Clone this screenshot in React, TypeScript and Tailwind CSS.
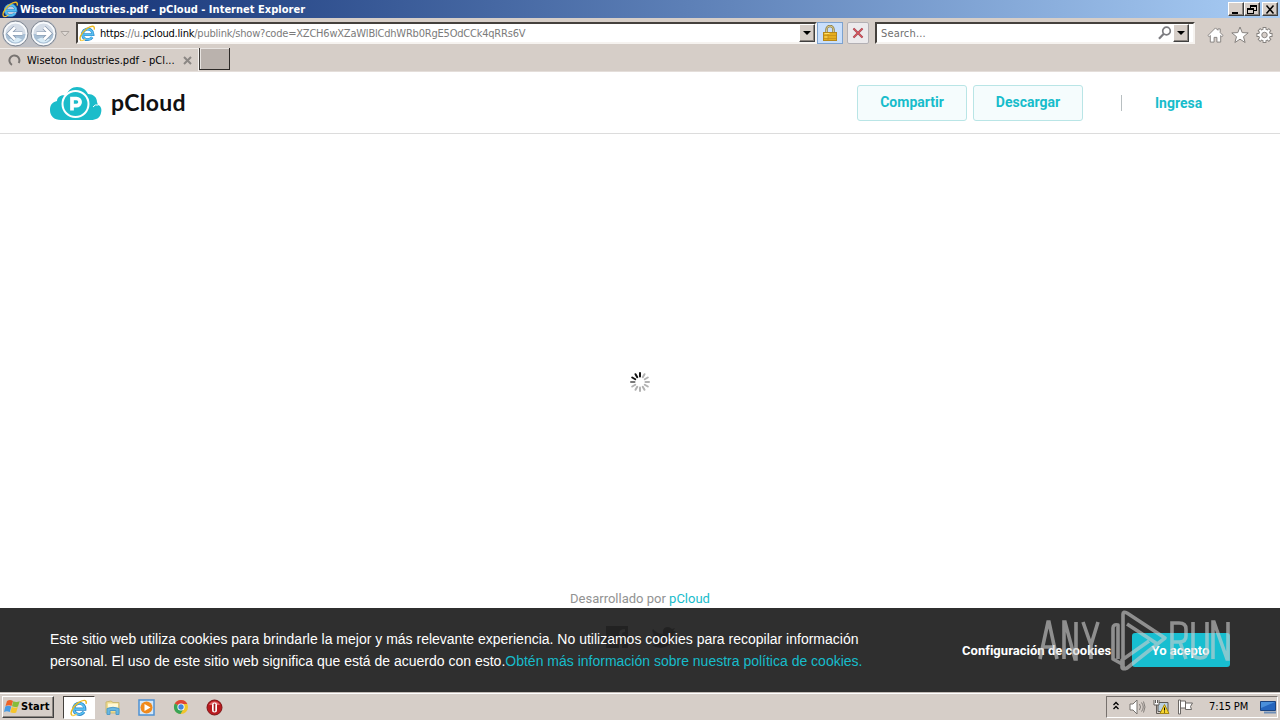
import type { ReactNode } from 'react';

const raised = 'border border-t-white border-l-white border-r-[#404040] border-b-[#404040] bg-[#d6cec8]';
const sunken = 'border-2 border-t-[#45413d] border-l-[#45413d] border-r-[#f6f3f0] border-b-[#f6f3f0] bg-white';

function IeLogo({ size = 16 }: { size?: number }) {
  return (
    <svg width={size} height={size} viewBox="0 0 16 16" className="shrink-0" fill="none">
      <circle cx="8" cy="8.700" r="6" fill="#fff" fillOpacity=".75" />
      <path d="M4.200 9H13.200A5 5 0 1 0 12.400 11.500" stroke="#2b86c8" strokeWidth="2.700" />
      <path d="M4.200 9H13A4.900 4.900 0 1 0 12.300 11.300" stroke="#58bff1" strokeWidth="1.600" />
      <path d="M2 14.600C-.7 13.500 2.200 7 7.200 3.500 11.500.5 15.300.2 14.300 4.300" stroke="#edb91f" strokeWidth="1.300" />
      <path d="M2 14.600c1.200.4 2.700-.3 4-1.300" stroke="#f5d052" strokeWidth="1.100" />
    </svg>
  );
}

function NavCircle({ flip }: { flip?: boolean }) {
  return (
    <svg width="27" height="27" viewBox="0 0 27 27" className="shrink-0">
      <circle cx="13.500" cy="13.500" r="12.500" fill="#e3e7ed" stroke="#7d8591" />
      <circle cx="13.500" cy="13.500" r="10.800" fill="#d5dde7" stroke="#f9fbfd" strokeWidth="1.500" />
      <path d="M3.500 14h20a10 9.500 0 0 1-20 0z" fill="#a9c0d5" />
      <path d="M7 19.500q6.500-4 13 0-6.500 6-13 0z" fill="#d9ecf7" />
      <g transform={flip ? 'rotate(180 13.5 13.5)' : undefined} fill="none">
        <path d="M13 7.500l-6 6 6 6M8 13.500H20.500" stroke="#8496ad" strokeWidth="4.200" />
        <path d="M13 7.500l-6 6 6 6M8 13.500H20.500" stroke="#fff" strokeWidth="2.800" />
      </g>
    </svg>
  );
}

function WinButton({ children }: { children: ReactNode }) {
  return (
    <button className={`flex h-[14px] w-[16px] items-center justify-center shadow-[inset_-1px_-1px_#8b8580] ${raised}`}>
      <svg width="12" height="11" viewBox="0 0 12 11" fill="none" stroke="#000" shapeRendering="crispEdges">
        {children}
      </svg>
    </button>
  );
}

function DropButton() {
  return (
    <button className={`flex h-[18px] w-[16px] shrink-0 items-center justify-center shadow-[inset_-1px_-1px_#8b8580] ${raised}`}>
      <svg width="8" height="4" viewBox="0 0 8 4"><path d="M0 0h8L4 4z" /></svg>
    </button>
  );
}

function TitleBar() {
  return (
    <div className="flex h-[18px] items-center bg-linear-to-r from-[#102b70] to-[#a9cdf5] pl-[2px] pr-[2px]">
      <IeLogo size={17} />
      <span className="ml-px grow whitespace-nowrap pt-px font-['DejaVu_Sans_Condensed','DejaVu_Sans',sans-serif] text-[11px] font-bold leading-[17px] tracking-[0.02px] text-white">
        Wiseton Industries.pdf - pCloud - Internet Explorer
      </span>
      <WinButton><path d="M2 8h6M2 9h6" /></WinButton>
      <WinButton><path d="M4 1.500h6v5H8M4 1v3M1.500 4.500h6v5h-6zM1 5.500h7M4 2.500h6" /></WinButton>
      <div className="w-[2px]" />
      <WinButton><path d="M2.500 1.500l7 8M9.500 1.500l-7 8" strokeWidth="1.500" shapeRendering="auto" /></WinButton>
    </div>
  );
}

function AddressBar() {
  return (
    <div className="flex h-[30px] items-start pl-[2px]">
      <div className="mt-[2px] flex h-[27px] gap-px rounded-full bg-[#bfc0c5]">
        <NavCircle />
        <NavCircle flip />
      </div>
      <svg width="10" height="6" viewBox="0 0 10 6" className="ml-[3px] mt-[13px]" fill="#e1dbd7" stroke="#aaa4a0">
        <path d="M1 .5h8L5 5z" />
      </svg>
      <div className={`ml-[6px] mt-[4px] flex h-[22px] w-[741px] items-center pl-[1px] ${sunken}`}>
        <IeLogo size={17} />
        <div className="ml-[4px] grow whitespace-nowrap pt-[2px] font-['DejaVu_Sans_Condensed','DejaVu_Sans',sans-serif] text-[11px] leading-[16px] tracking-[-0.21px] text-[#7b7b7b]">
          <span className="text-black">https</span>://u.<span className="text-black">pcloud.link</span>/publink/show?code=XZCH6wXZaWlBlCdhWRb0RgE5OdCCk4qRRs6V
        </div>
        <DropButton />
      </div>
      <div className="mt-[4px] flex h-[22px] w-[26px] items-center justify-center border border-[#7da2cf] bg-[#c9dffc]">
        <svg width="14" height="17" viewBox="0 0 14 17">
          <path d="M3.500 8V4.500a3.500 3.500 0 0 1 7 0V8" fill="none" stroke="#8a7a42" strokeWidth="2.400" />
          <path d="M3.500 8V4.500a3.500 3.500 0 0 1 7 0V8" fill="none" stroke="#eee0a0" strokeWidth=".8" />
          <rect x=".5" y="7.500" width="13" height="8" fill="#e6ad1d" stroke="#b5871b" />
          <path d="M1 10.500h12M1 13.500h12M5 8v8" stroke="#c28e1b" strokeWidth=".7" />
          <path d="M1.500 8.500h5M1.500 12h3" stroke="#ffe36c" />
        </svg>
      </div>
      <div className="ml-[4px] mt-[4px] flex h-[22px] w-[22px] items-center justify-center rounded-[2px] border border-[#b3b0b4] bg-[#eceaec]">
        <svg width="12" height="12" viewBox="0 0 12 12" fill="none">
          <path d="M1.500 1.500l9 9M10.500 1.500l-9 9" stroke="#96525b" strokeWidth="2.200" />
          <path d="M1.500 1.500l9 9M10.500 1.500l-9 9" stroke="#d8545d" strokeWidth="1.200" />
        </svg>
      </div>
      <div className={`ml-[6px] mt-[4px] flex h-[22px] w-[320px] items-center pl-[4px] pr-[4px] ${sunken}`}>
        <span className="grow pt-[2px] font-['DejaVu_Sans_Condensed','DejaVu_Sans',sans-serif] text-[11px] leading-[16px] tracking-[0.15px] text-[#6f6f6f]">Search...</span>
        <svg width="14" height="14" viewBox="0 0 14 14" fill="none" stroke="#7c7c80" strokeWidth="1.700" className="mr-[1px]">
          <circle cx="8.500" cy="5" r="3.800" />
          <path d="M5.800 7.800L1 12.700" strokeWidth="2.200" />
        </svg>
        <DropButton />
      </div>
      <div className="ml-[12px] mt-[8px] flex gap-[7px]">
        <svg width="17" height="18" viewBox="0 0 18 18" fill="#fff" stroke="#85817e" strokeLinejoin="round">
          <path d="M9 1.500L1 9.500l1.300 1.300 1.200-1.200v6.900h4v-5h3v5h4V9.600l1.200 1.200L17 9.500 14 6.500v-4h-2.500V4z" />
        </svg>
        <svg width="18" height="18" viewBox="0 0 18 18" fill="#fff" stroke="#85817e" strokeLinejoin="round">
          <path d="M9 1l2.200 5.600 6 .3-4.700 3.800 1.600 5.800L9 13.200l-5.100 3.300 1.600-5.800L.8 6.900l6-.3z" />
        </svg>
        <svg width="17" height="18" viewBox="0 0 18 18" fill="none">
          <path d="M9 .500v17M.5 9h17M3 3l12 12M15 3L3 15" stroke="#85817e" strokeWidth="4" />
          <circle cx="9" cy="9" r="6.600" fill="#85817e" />
          <path d="M9 1.500v15M1.500 9h15M3.700 3.700l10.600 10.600M14.300 3.700L3.700 14.300" stroke="#fff" strokeWidth="2.200" />
          <circle cx="9" cy="9" r="5.700" fill="#fff" />
          <circle cx="9" cy="9" r="2.900" fill="#d6cec8" stroke="#85817e" />
        </svg>
      </div>
    </div>
  );
}

function TabStrip() {
  return (
    <div className="flex h-[24px] items-start border-b border-[#e4deda]">
      <div className="flex h-[23px] w-[199px] items-center border-t border-r border-t-[#f0ece9] border-r-[#f6f3f1] pl-[8px]">
        <svg width="13" height="13" viewBox="0 0 13 13" fill="none" stroke="#777370" strokeWidth="2">
          <path d="M4 10.800A5 5 0 1 1 10.700 9" />
        </svg>
        <span className="ml-[6px] w-[156px] whitespace-nowrap pt-px font-['DejaVu_Sans_Condensed','DejaVu_Sans',sans-serif] text-[11px] leading-[21px] tracking-[0.05px]">
          Wiseton Industries.pdf - pCl...
        </span>
        <svg width="9" height="9" viewBox="0 0 9 9" stroke="#8b8784" strokeWidth="2"><path d="M1 1l7 7M8 1L1 8" /></svg>
      </div>
      <div className="h-[22px] w-[31px] border-r border-b border-l border-l-[#3c3937] border-r-[#2c2927] border-b-[#2c2927] bg-[#bab2ad] shadow-[inset_1px_1px_#e8e4e1]" />
    </div>
  );
}

function SiteHeader() {
  const pill = "flex h-[36px] w-[110px] items-center justify-center rounded-[3px] border border-[#b9e5e6] bg-[#f5fcfd] pb-px text-[14px] font-bold text-[#17bccb]";
  return (
    <header className="flex h-[62px] items-center border-b border-[#dcdcdc] bg-white px-[50px] font-['Roboto',sans-serif]">
      <svg width="52" height="34" viewBox="0 0 52 34" className="mt-[2px]">
        <path d="M11 33C4 33 0 29 0 23c0-6 3-8 7-9 0-4 5-7 9-5C18 3 22 0 27 0c6 0 9 3 11 7 5 0 9 3 9 8l1 3c3 1 4 4 3 8-1 5-5 7-10 7z" fill="#1bbcca" />
        <circle cx="25.500" cy="17" r="13" fill="#1bbcca" stroke="#fff" strokeWidth="2" />
        <path d="M22 23.500V11.500h4.500a3.600 3.600 0 0 1 0 7.200H22" fill="none" stroke="#fff" strokeWidth="3.700" />
        <path d="M43 20q2-3 5-2" fill="none" stroke="#fff" strokeWidth="1" />
      </svg>
      <span className="ml-[9px] grow pb-[2px] font-['Lato',sans-serif] text-[23px] font-bold leading-[32px] tracking-[0.25px] text-[#111]">pCloud</span>
      <button className={`mr-[6px] ${pill}`}>Compartir</button>
      <button className={pill}>Descargar</button>
      <div className="ml-[38px] h-[16px] w-px bg-[#b8bfc1]" />
      <a className="ml-[33px] mt-px w-[75px] text-[14px] font-bold text-[#17bccb]">Ingresa</a>
    </header>
  );
}

function Spinner() {
  return (
    <svg width="22" height="22" viewBox="-11 -11 22 22" className="mt-[237px]">
      {Array.from({ length: 12 }, (_, i) => (
        <path
          key={i}
          d="M0-5.500V-9"
          transform={`rotate(${i * 30})`}
          stroke={i === 0 || i > 9 ? '#111' : i === 9 ? '#777' : '#b2b2b2'}
          strokeWidth="2"
          strokeLinecap="round"
        />
      ))}
    </svg>
  );
}

function Watermark() {
  return (
    <svg width="194" height="64" viewBox="0 0 194 64" className="pointer-events-none absolute left-[1037px] top-[-1px] opacity-60" fill="none" stroke="#cfcfcf" strokeWidth="3.600">
      <path d="M3 52l8-37h1l8 37M5 40h12M27 52V15h1l10 37h1V15M46 15l8 23 7-23M54 38v14" />
      <path d="M86 61V7q0-3 4-1l38 25-38 30q-5 2-5-1v-7l27-19M85 57l-9-5V21q0-4 5-3v34M90 17l32 21" strokeLinejoin="round" />
      <path d="M135 52V16h7q7 0 7 6v7q0 6-7 6h-7M143 35l6 17M156 15v29q0 7 7 7t7-7V15M176 52V15h1l13 37h1V15" />
    </svg>
  );
}

function CookieBar() {
  return (
    <div className="relative flex h-[84px] bg-[#2f2f2f] pl-[50px] pr-[50px]">
      <svg width="70" height="24" viewBox="0 0 70 24" className="absolute left-[606px] top-[18px]" fill="#222">
        <path d="M0 0h22v22h-6v-8h3v-3h-3V8q0-2 3-2V3q-6 0-6 5v3h-3v3h3v8H0z" />
        <path d="M47 3q4 5 10 5-1-6 4-7 3 0 5 2l3-1-2 3 3 0-3 3q0 12-12 14-5 0-9-3 5 0 7-2-4-1-5-4h3q-4-2-4-5l2 1q-4-3-2-6z" />
      </svg>
      <p className="relative mt-[20px] w-[912px] whitespace-nowrap font-['Liberation_Sans',sans-serif] text-[14px] leading-[22px] text-white">
        Este sitio web utiliza cookies para brindarle la mejor y más relevante experiencia. No utilizamos cookies para recopilar información
        <br />
        personal. El uso de este sitio web significa que está de acuerdo con esto.
        <a className="text-[#17bccb]">Obtén más información sobre nuestra política de cookies.</a>
      </p>
      <div className="flex h-[84px] grow items-center justify-between font-['Roboto',sans-serif] text-[13px] font-bold text-white">
        <span className="whitespace-nowrap pt-[2px] tracking-[0.03px]">Configuración de cookies</span>
        <button className="h-[34px] w-[98px] rounded-[3px] bg-[#17bed0] pr-px pt-[2px] font-bold">Yo acepto</button>
      </div>
      <Watermark />
    </div>
  );
}

function WindowsFlag() {
  return (
    <svg width="17" height="16" viewBox="0 0 17 16">
      <path d="M3 2q3-2 6 0L7.500 7Q5 5.500 1.500 7z" fill="#ed6328" />
      <path d="M9.300 2.300q3 1.500 6.400 0L14 7.500q-3 1.300-6-.2z" fill="#86bd3b" />
      <path d="M1.300 7.400q3-1.500 6 .2L5.800 13q-3-1.700-5.800 0z" fill="#489be4" />
      <path d="M7.800 7.900q3 1.500 6 .2l-1.600 5.400q-3 1.300-5.900-.2z" fill="#f6c52c" />
    </svg>
  );
}

function Taskbar() {
  return (
    <div className="flex h-[28px] items-start border-t border-[#c4bdb8] bg-[#d6cec8] shadow-[inset_0_1px_#fff]">
      <button className={`ml-[2px] mt-[3px] flex h-[22px] w-[52px] items-center pl-px shadow-[inset_-1px_-1px_#8b8580] ${raised}`}>
        <WindowsFlag />
        <span className="pt-px font-['DejaVu_Sans_Condensed','DejaVu_Sans',sans-serif] text-[11px] font-bold tracking-[0.1px]">Start</span>
      </button>
      <div className="ml-[9px] mt-[3px] flex h-[23px] w-[32px] items-center justify-center border border-t-[#45413d] border-l-[#45413d] border-r-white border-b-white bg-white">
        <IeLogo size={18} />
      </div>
      <div className="ml-[10px] mt-[6px] flex grow gap-[17px]">
        <svg width="16" height="17" viewBox="0 0 16 17">
          <path d="M1 3l5-1 2 1.500h6V14H1z" fill="#f0dc8e" stroke="#cbb974" />
          <path d="M3 4.500h10v4H3z" fill="#fff8d5" />
          <path d="M2 15.500V9.500q6-2.500 12 0v6h-3v-4H5v4z" fill="#69b8e1" stroke="#4f9bcb" />
        </svg>
        <svg width="17" height="17" viewBox="0 0 17 17">
          <path d="M1 1h15v15H1z" fill="#d4e8fa" stroke="#4f91d2" strokeWidth="1.500" />
          <circle cx="8.500" cy="8.500" r="6" fill="#f08a1d" />
          <path d="M6.500 5l6 3.500-6 3.500z" fill="#fff" />
        </svg>
        <svg width="16" height="16" viewBox="0 0 16 16" className="ml-px">
          <circle cx="8" cy="8" r="7" fill="#f1c52b" />
          <path d="M8 8L1.800 4.600A7 7 0 0 1 14.300 5H8z" fill="#df4436" />
          <path d="M8 8L1.800 4.600A7 7 0 0 0 7.500 15L11 9z" fill="#39a457" />
          <circle cx="8" cy="8" r="3.600" fill="#fff" />
          <circle cx="8" cy="8" r="2.700" fill="#4385dc" />
        </svg>
        <svg width="17" height="17" viewBox="0 0 17 17">
          <circle cx="8.500" cy="8.500" r="7.500" fill="#b91b1f" stroke="#7d1416" />
          <path d="M3 6a6 6 0 0 1 11 0z" fill="#e2676a" />
          <rect x="6" y="3.500" width="5" height="10" rx="2.500" fill="#fff" />
          <rect x="7.700" y="4.500" width="1.600" height="8" rx=".8" fill="#a51c1f" />
        </svg>
      </div>
      <div className="mr-[2px] mt-[3px] flex h-[22px] w-[172px] items-center border border-t-[#77716d] border-l-[#77716d] border-r-white border-b-white pl-[6px]">
        <svg width="6" height="9" viewBox="0 0 6 9" fill="none" stroke="#000" strokeWidth="1.300" className="mb-[3px]">
          <path d="M.5 4L3 1.500 5.500 4M.5 8L3 5.500 5.500 8" />
        </svg>
        <svg width="17" height="16" viewBox="0 0 17 16" fill="none" stroke="#77736f" className="ml-[10px]">
          <path d="M1 5h3l4-4v14l-4-4H1z" fill="#fff" />
          <path d="M10.500 5q2 3 0 6M12.500 3.500q3.500 4.500 0 9M14.500 2.500q3 5.500 0 11" strokeWidth=".9" />
        </svg>
        <svg width="17" height="16" viewBox="0 0 17 16" className="ml-[7px]">
          <path d="M5 3.500h10v9H5z" fill="#bbd0df" stroke="#5d5955" />
          <path d="M1 1v5h5V1z" fill="#fff" />
          <path d="M1 1v5h5V1M3.500 6v8.500H9M2.500 1v3M4.500 1v3" fill="none" stroke="#605c58" />
          <path d="M11.500 5.500l4.500 9H7z" fill="#f8d52e" stroke="#a58711" />
          <path d="M11.500 8.500v3M11.500 12.500v1" stroke="#000" />
        </svg>
        <svg width="17" height="16" viewBox="0 0 17 16" fill="#fff" stroke="#6b6764" className="ml-[7px]">
          <path d="M1.500 1v14h2V1zM3.500 2h5v7h-5M8.500 4h7l-2 3.500 1 3h-6z" />
        </svg>
        <span className="ml-[15px] w-[51px] whitespace-nowrap pt-px font-['DejaVu_Sans_Condensed','DejaVu_Sans',sans-serif] text-[11px] tracking-[-0.1px]">7:15 PM</span>
        <svg width="17" height="14" viewBox="0 0 17 14">
          <path d="M.5 1.500h15v9H.5z" fill="#2565bd" stroke="#1b437f" />
          <path d="M1 2h14L1 8z" fill="#4a8fda" />
          <path d="M4 12.500h12" stroke="#6e8eb7" strokeWidth="2" />
        </svg>
      </div>
    </div>
  );
}

export default function App() {
  return (
    <div className="flex h-[720px] w-[1280px] flex-col overflow-hidden bg-[#d6cec8] text-black">
      <TitleBar />
      <AddressBar />
      <TabStrip />
      <SiteHeader />
      <main className="flex grow flex-col items-center bg-white">
        <Spinner />
        <p className="mt-[198px] font-['Roboto',sans-serif] text-[13px] leading-[16px] text-[#929292]">
          Desarrollado por <a className="text-[#17bccb]">pCloud</a>
        </p>
      </main>
      <CookieBar />
      <Taskbar />
    </div>
  );
}
